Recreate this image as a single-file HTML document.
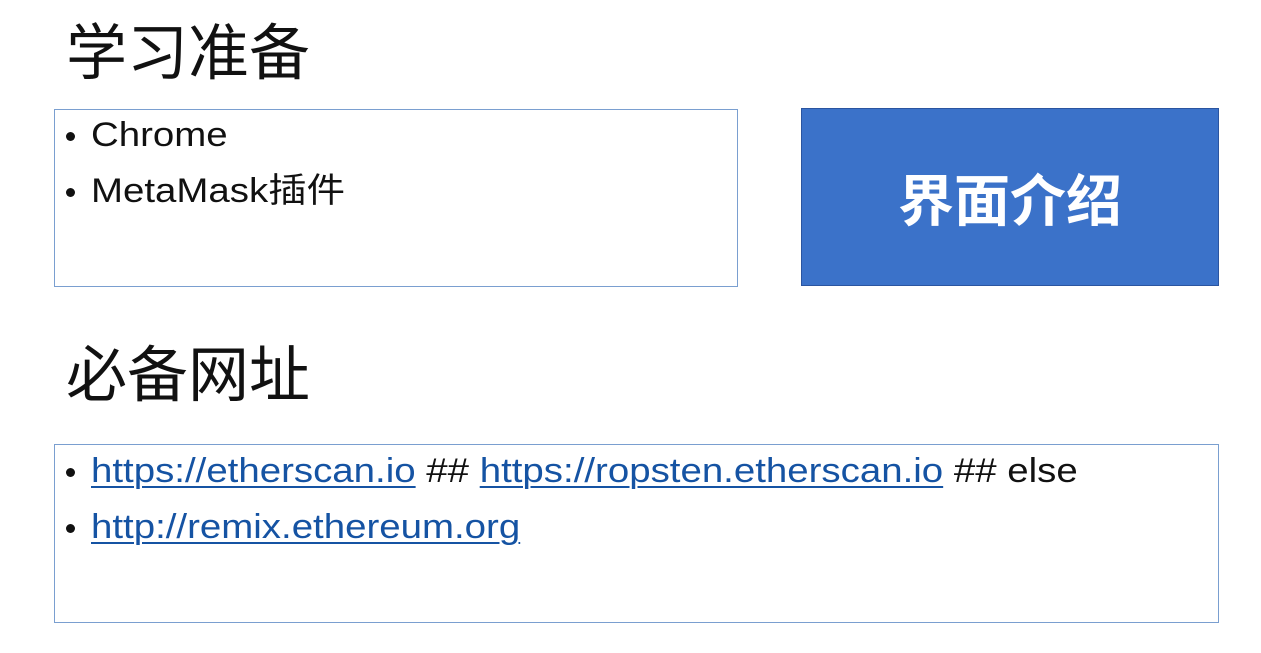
<!DOCTYPE html>
<html><head><meta charset="utf-8"><style>
body{margin:0;width:1261px;height:653px;background:#fff;position:relative;overflow:hidden;font-family:"Liberation Sans","Noto Sans CJK SC",sans-serif;color:#111}
.t{position:absolute;left:66px;font-size:61px;line-height:60px;font-family:"Noto Sans CJK SC",sans-serif}
.box{position:absolute;border:1.5px solid #7a9fd0;box-sizing:border-box}
.l{position:absolute;left:66px;font-size:34px;line-height:40px;height:40px;white-space:nowrap}
.l::before{content:"";position:absolute;left:0;top:17px;width:9px;height:9px;border-radius:50%;background:#111}
.l span.c{position:absolute;left:25px;top:0;transform:scaleX(1.13);transform-origin:left}
a{color:#1553a3;text-decoration:underline;text-decoration-thickness:2px;text-underline-offset:4px}
.blue{position:absolute;left:801px;top:108px;width:418px;height:178px;background:#3b72c9;border:1.5px solid #2b55a0;box-sizing:border-box;color:#fff;font-size:56px;font-weight:bold;display:flex;align-items:center;justify-content:center;font-family:"Noto Sans CJK SC",sans-serif}
</style></head><body>
<div class="t" style="top:18px">学习准备</div>
<div class="box" style="left:54px;top:109px;width:684px;height:178px"></div>
<div class="l" style="top:115px"><span class="c">Chrome</span></div>
<div class="l" style="top:171px"><span class="c">MetaMask插件</span></div>
<div class="blue">界面介绍</div>
<div class="t" style="top:340px">必备网址</div>
<div class="box" style="left:54px;top:444px;width:1165px;height:179px"></div>
<div class="l" style="top:451px"><span class="c"><a>https://etherscan.io</a> ## <a>https://ropsten.etherscan.io</a> ## else</span></div>
<div class="l" style="top:507px"><span class="c"><a>http://remix.ethereum.org</a></span></div>
</body></html>
